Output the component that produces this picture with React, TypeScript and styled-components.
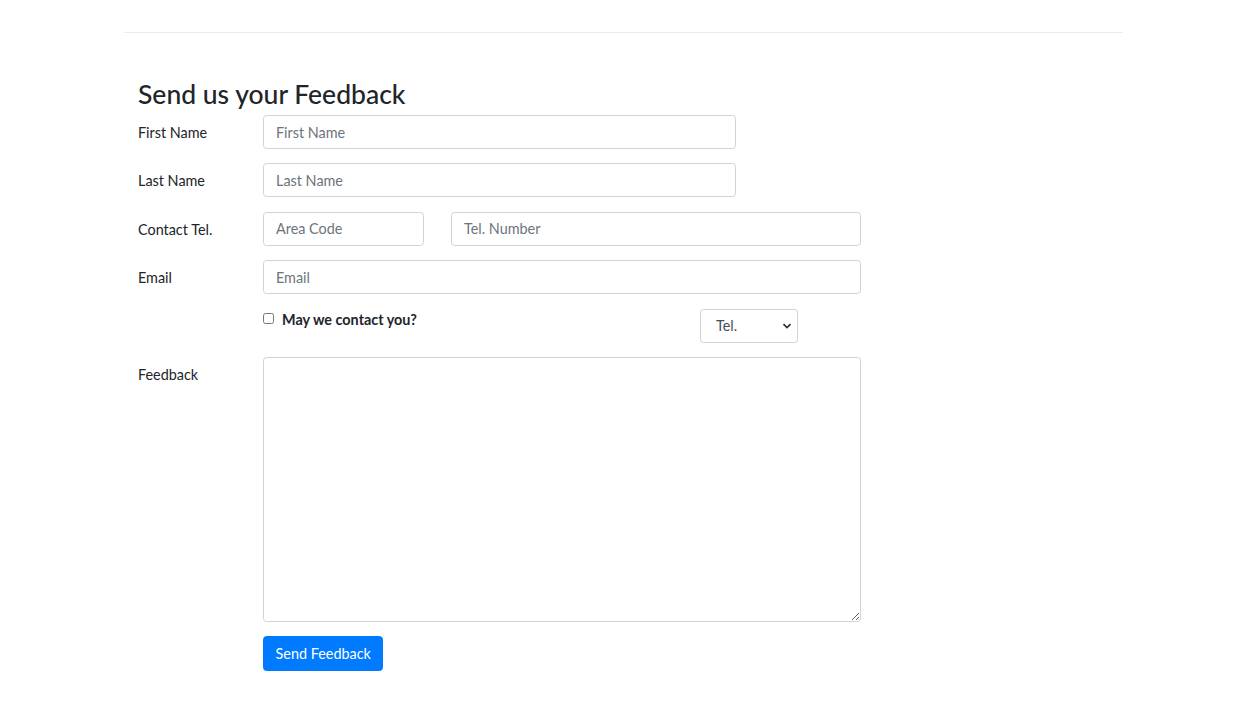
import React, { useState } from "react";
import styled, { createGlobalStyle } from "styled-components";

const GlobalStyle = createGlobalStyle`
  body {
    margin: 0;
    background: #fff;
    color: #212529;
    font-family: Lato, "Noto Sans", Arial, sans-serif;
    font-size: 14.4px;
    line-height: 1.5;
  }
  * { box-sizing: border-box; }
`;

const Container = styled.div`
  width: 999px;
  margin: 0 auto;
  padding-top: 32px;
`;

const Rule = styled.hr`
  margin: 0;
  border: 0;
  border-top: 1px solid rgba(0, 0, 0, 0.08);
`;

const FormArea = styled.form`
  margin: 45px 0 0 14px;
  width: 723px;
`;

const Title = styled.h2`
  margin: 0 0 5px;
  font-size: 26.5px;
  font-weight: 500;
  line-height: 32px;
  color: #212529;
`;

const Row = styled.div`
  display: grid;
  grid-template-columns: 125px 598px;
  margin-bottom: 14.4px;
`;

const Label = styled.label`
  padding-top: 7px;
  line-height: 21.6px;
  font-size: 14.4px;
`;

const Field = styled.div<{ $split?: boolean }>`
  display: ${(p) => (p.$split ? "grid" : "block")};
  grid-template-columns: 161px 410px;
  column-gap: 27px;
`;

const Input = styled.input<{ $w?: number }>`
  display: block;
  width: ${(p) => (p.$w ? `${p.$w}px` : "100%")};
  height: 34px;
  padding: 0 12px;
  font: inherit;
  font-size: 14.4px;
  color: #495057;
  background: #fff;
  border: 1px solid #ced4da;
  border-radius: 3.6px;
  outline: none;
  &::placeholder {
    color: #6c757d;
  }
`;

const CheckRow = styled.div`
  display: flex;
  align-items: flex-start;
`;

const Check = styled.label`
  display: flex;
  align-items: center;
  gap: 8px;
  width: 437px;
  font-weight: 700;
  line-height: 21.6px;
  input {
    margin: 0 0 2px;
    width: 11px;
    height: 11px;
  }
`;

const SelectBox = styled.div`
  position: relative;
  width: 98px;
  height: 34px;
`;

const Select = styled.select`
  appearance: none;
  width: 100%;
  height: 100%;
  padding: 0 24px 0 15px;
  font: inherit;
  font-size: 14.4px;
  color: #495057;
  background: #fff;
  border: 1px solid #ced4da;
  border-radius: 3.6px;
  outline: none;
`;

const Chevron = styled.svg`
  position: absolute;
  right: 6px;
  top: 13px;
  pointer-events: none;
`;

const TextArea = styled.textarea`
  display: block;
  width: 100%;
  height: 265px;
  padding: 6px 12px;
  font: inherit;
  border: 1px solid #ced4da;
  border-radius: 3.6px;
  outline: none;
`;

const Button = styled.button`
  padding: 5.4px 11.6px;
  font: inherit;
  font-size: 14.4px;
  line-height: 21.6px;
  color: #fff;
  background: #007bff;
  border: 1px solid #007bff;
  border-radius: 3.6px;
  cursor: pointer;
`;

const App = () => {
  const [contact, setContact] = useState(false);
  return (
    <>
      <GlobalStyle />
      <Container>
        <Rule />
        <FormArea onSubmit={(e) => e.preventDefault()}>
          <Title>Send us your Feedback</Title>
          <Row>
            <Label>First Name</Label>
            <Field>
              <Input $w={473} placeholder="First Name" />
            </Field>
          </Row>
          <Row>
            <Label>Last Name</Label>
            <Field>
              <Input $w={473} placeholder="Last Name" />
            </Field>
          </Row>
          <Row>
            <Label>Contact Tel.</Label>
            <Field $split>
              <Input placeholder="Area Code" />
              <Input placeholder="Tel. Number" />
            </Field>
          </Row>
          <Row>
            <Label>Email</Label>
            <Field>
              <Input type="email" placeholder="Email" />
            </Field>
          </Row>
          <Row>
            <span />
            <CheckRow>
              <Check>
                <input
                  type="checkbox"
                  checked={contact}
                  onChange={(e) => setContact(e.target.checked)}
                />
                May we contact you?
              </Check>
              <SelectBox>
                <Select defaultValue="Tel.">
                  <option>Tel.</option>
                  <option>Email</option>
                </Select>
                <Chevron width="10" height="8" viewBox="0 0 10 8">
                  <path
                    d="M1.5 2.2 L5 5.6 L8.5 2.2"
                    fill="none"
                    stroke="#333"
                    strokeWidth="1.8"
                  />
                </Chevron>
              </SelectBox>
            </CheckRow>
          </Row>
          <Row>
            <Label>Feedback</Label>
            <Field>
              <TextArea />
            </Field>
          </Row>
          <Row>
            <span />
            <Field>
              <Button type="submit">Send Feedback</Button>
            </Field>
          </Row>
        </FormArea>
      </Container>
    </>
  );
};

export default App;
